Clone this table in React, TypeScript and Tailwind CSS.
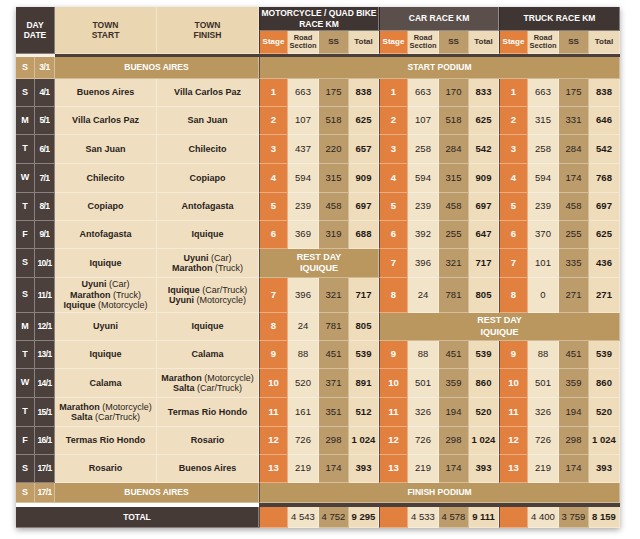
import React from "react";

type Line = [string, string?];
type Town = Line[];
type Nums = (number | string)[] | "REST";
type Row = { d: string; date: string; start: Town; finish: Town; m: Nums; c: Nums | "REST8" | "SKIP"; t: Nums | "SKIP" };

const rows: Row[] = [
  { d: "S", date: "4/1", start: [["Buenos Aires"]], finish: [["Villa Carlos Paz"]], m: [1, 663, 175, 838], c: [1, 663, 170, 833], t: [1, 663, 175, 838] },
  { d: "M", date: "5/1", start: [["Villa Carlos Paz"]], finish: [["San Juan"]], m: [2, 107, 518, 625], c: [2, 107, 518, 625], t: [2, 315, 331, 646] },
  { d: "T", date: "6/1", start: [["San Juan"]], finish: [["Chilecito"]], m: [3, 437, 220, 657], c: [3, 258, 284, 542], t: [3, 258, 284, 542] },
  { d: "W", date: "7/1", start: [["Chilecito"]], finish: [["Copiapo"]], m: [4, 594, 315, 909], c: [4, 594, 315, 909], t: [4, 594, 174, 768] },
  { d: "T", date: "8/1", start: [["Copiapo"]], finish: [["Antofagasta"]], m: [5, 239, 458, 697], c: [5, 239, 458, 697], t: [5, 239, 458, 697] },
  { d: "F", date: "9/1", start: [["Antofagasta"]], finish: [["Iquique"]], m: [6, 369, 319, 688], c: [6, 392, 255, 647], t: [6, 370, 255, 625] },
  { d: "S", date: "10/1", start: [["Iquique"]], finish: [["Uyuni", " (Car)"], ["Marathon", " (Truck)"]], m: "REST", c: [7, 396, 321, 717], t: [7, 101, 335, 436] },
  { d: "S", date: "11/1", start: [["Uyuni", " (Car)"], ["Marathon", " (Truck)"], ["Iquique", " (Motorcycle)"]], finish: [["Iquique", " (Car/Truck)"], ["Uyuni", " (Motorcycle)"]], m: [7, 396, 321, 717], c: [8, 24, 781, 805], t: [8, 0, 271, 271] },
  { d: "M", date: "12/1", start: [["Uyuni"]], finish: [["Iquique"]], m: [8, 24, 781, 805], c: "REST8", t: "SKIP" },
  { d: "T", date: "13/1", start: [["Iquique"]], finish: [["Calama"]], m: [9, 88, 451, 539], c: [9, 88, 451, 539], t: [9, 88, 451, 539] },
  { d: "W", date: "14/1", start: [["Calama"]], finish: [["Marathon", " (Motorcycle)"], ["Salta", " (Car/Truck)"]], m: [10, 520, 371, 891], c: [10, 501, 359, 860], t: [10, 501, 359, 860] },
  { d: "T", date: "15/1", start: [["Marathon", " (Motorcycle)"], ["Salta", " (Car/Truck)"]], finish: [["Termas Rio Hondo"]], m: [11, 161, 351, 512], c: [11, 326, 194, 520], t: [11, 326, 194, 520] },
  { d: "F", date: "16/1", start: [["Termas Rio Hondo"]], finish: [["Rosario"]], m: [12, 726, 298, "1 024"], c: [12, 726, 298, "1 024"], t: [12, 726, 298, "1 024"] },
  { d: "S", date: "17/1", start: [["Rosario"]], finish: [["Buenos Aires"]], m: [13, 219, 174, 393], c: [13, 219, 174, 393], t: [13, 219, 174, 393] },
];

const base = "flex items-center justify-center text-center border-r border-b border-white/35";
const sepL = "border-l border-l-[#5e4d42]";

function Cell({ className = "", children }: { className?: string; children?: React.ReactNode }) {
  return <div className={`${base} ${className}`}>{children}</div>;
}

function TownCell({ town }: { town: Town }) {
  return (
    <Cell className="bg-[#efdfc0] text-[9px] leading-[10.5px] text-[#2b2320]">
      <div>
        {town.map((l, i) => (
          <div key={i}>
            <span className="font-bold">{l[0]}</span>
            {l[1] ? <span className="font-normal">{l[1]}</span> : null}
          </div>
        ))}
      </div>
    </Cell>
  );
}

function Group({ n }: { n: (number | string)[] }) {
  return (
    <>
      <Cell className={`bg-[#e2813f] text-white font-bold text-[9.5px] ${sepL}`}>{n[0]}</Cell>
      <Cell className="bg-[#f2e4c9] text-[9.5px] text-[#2b2320]">{n[1]}</Cell>
      <Cell className="bg-[#bc9c6b] text-[9.5px] text-[#2b2320]">{n[2]}</Cell>
      <Cell className="bg-[#eedcba] text-[9.5px] font-bold text-[#1f1916]">{n[3]}</Cell>
    </>
  );
}

function Rest({ span8 }: { span8?: boolean }) {
  return (
    <Cell className={`${span8 ? "col-span-8" : "col-span-4"} bg-[#b9975f] text-white font-bold text-[9px] leading-[11.5px] ${sepL}`}>
      <div>
        <div>REST DAY</div>
        <div>IQUIQUE</div>
      </div>
    </Cell>
  );
}

function SubHeader() {
  return (
    <>
      <Cell className="bg-[#e3803c] text-white font-bold text-[8px] border-l border-l-[#453a35]">Stage</Cell>
      <Cell className="bg-[#efdfc0] text-[#3a2f2a] font-bold text-[7.5px] leading-[8.5px]">
        <div>
          <div>Road</div>
          <div>Section</div>
        </div>
      </Cell>
      <Cell className="bg-[#bc9c6b] text-[#3a2f2a] font-bold text-[8px]">SS</Cell>
      <Cell className="bg-[#ecdab8] text-[#3a2f2a] font-bold text-[8px]">Total</Cell>
    </>
  );
}

function TotalGroup({ a, b, c }: { a: string; b: string; c: string }) {
  return (
    <>
      <Cell className={`bg-[#e2813f] ${sepL}`} />
      <Cell className="bg-[#f2e4c9] text-[9.5px] text-[#2b2320]">{a}</Cell>
      <Cell className="bg-[#bc9c6b] text-[9.5px] text-[#2b2320]">{b}</Cell>
      <Cell className="bg-[#eedcba] text-[9.5px] font-bold text-[#1f1916]">{c}</Cell>
    </>
  );
}

export default function App() {
  return (
    <div className="min-h-screen bg-white pl-4 pt-[7px] font-['Liberation_Sans',Arial,sans-serif]">
      <div className="grid w-[604px] grid-cols-[19px_20px_102px_102px_29px_31px_30px_30px_29px_31px_30px_30px_29px_31px_30px_31px] grid-rows-[24px_23px_3px_22px_28px_28px_29px_29px_28px_28px_29px_35px_28px_28px_29px_29px_28px_28px_20px_4px_21px] shadow-[0_2px_6px_rgba(0,0,0,0.35)]">
        <Cell className="col-span-2 row-span-2 bg-[#453a36] text-white font-bold text-[8.5px] leading-[10.5px]">
          <div>
            <div>DAY</div>
            <div>DATE</div>
          </div>
        </Cell>
        <Cell className="row-span-2 bg-[#ead6b0] text-[#3a2f2a] font-bold text-[8.5px] leading-[10.5px]">
          <div>
            <div>TOWN</div>
            <div>START</div>
          </div>
        </Cell>
        <Cell className="row-span-2 bg-[#ead6b0] text-[#3a2f2a] font-bold text-[8.5px] leading-[10.5px]">
          <div>
            <div>TOWN</div>
            <div>FINISH</div>
          </div>
        </Cell>
        <Cell className="col-span-4 bg-[#3f3532] text-white font-bold text-[8.5px] leading-[11px] border-l border-l-[#2f2724]">
          <div>
            <div>MOTORCYCLE / QUAD BIKE</div>
            <div>RACE KM</div>
          </div>
        </Cell>
        <Cell className="col-span-4 bg-[#5a4f4b] text-white font-bold text-[8.5px] border-l border-l-[#2f2724]">CAR RACE KM</Cell>
        <Cell className="col-span-4 bg-[#3f3633] text-white font-bold text-[8.5px] border-l border-l-[#2f2724]">TRUCK RACE KM</Cell>

        <SubHeader />
        <SubHeader />
        <SubHeader />

        <div className="col-span-2 bg-[#f6efe4]" />
        <div className="col-span-14 bg-[#4a3f3b]" />

        <Cell className="bg-[#c09d66] text-white font-bold text-[9px]">S</Cell>
        <Cell className="bg-[#c09d66] text-white font-bold text-[8.5px] tracking-[-0.5px]">3/1</Cell>
        <Cell className="col-span-2 bg-[#b9975f] text-white font-bold text-[8.5px]">BUENOS AIRES</Cell>
        <Cell className={`col-span-12 bg-[#b9975f] text-white font-bold text-[8.5px] ${sepL}`}>START PODIUM</Cell>

        {rows.map((r, i) => (
          <React.Fragment key={i}>
            <Cell className="bg-[#4b403c] text-white font-bold text-[9px]">{r.d}</Cell>
            <Cell className="bg-[#4b403c] text-white font-bold text-[8.5px] tracking-[-0.6px]">{r.date}</Cell>
            <TownCell town={r.start} />
            <TownCell town={r.finish} />
            {r.m === "REST" ? <Rest /> : <Group n={r.m} />}
            {r.c === "REST8" ? <Rest span8 /> : r.c === "SKIP" ? null : r.c === "REST" ? <Rest /> : <Group n={r.c} />}
            {r.t === "SKIP" || r.t === "REST" ? null : <Group n={r.t} />}
          </React.Fragment>
        ))}

        <Cell className="bg-[#c09d66] text-white font-bold text-[9px]">S</Cell>
        <Cell className="bg-[#c09d66] text-white font-bold text-[8.5px] tracking-[-0.6px]">17/1</Cell>
        <Cell className="col-span-2 bg-[#b9975f] text-white font-bold text-[8.5px]">BUENOS AIRES</Cell>
        <Cell className={`col-span-12 bg-[#b9975f] text-white font-bold text-[8.5px] ${sepL}`}>FINISH PODIUM</Cell>

        <div className="col-span-4 bg-white" />
        <div className="col-span-12 bg-[#4a3f3b]" />

        <Cell className="col-span-4 bg-[#453a36] text-white font-bold text-[8.5px]">TOTAL</Cell>
        <TotalGroup a="4 543" b="4 752" c="9 295" />
        <TotalGroup a="4 533" b="4 578" c="9 111" />
        <TotalGroup a="4 400" b="3 759" c="8 159" />
      </div>
    </div>
  );
}
